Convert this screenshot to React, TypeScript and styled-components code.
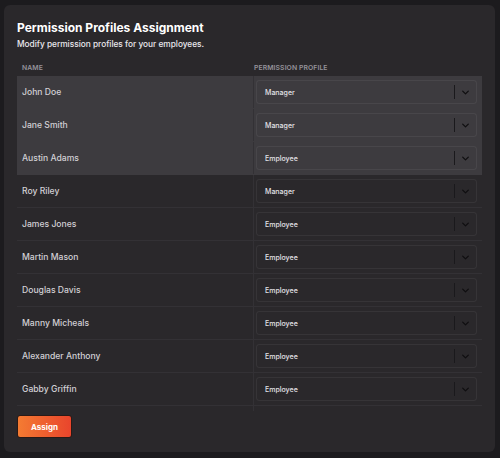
import { FC } from 'react';
import styled, { createGlobalStyle, css } from 'styled-components';

interface IEmployee {
  name: string;
  profile: 'Manager' | 'Employee';
}

const employees: IEmployee[] = [
  { name: 'John Doe', profile: 'Manager' },
  { name: 'Jane Smith', profile: 'Manager' },
  { name: 'Austin Adams', profile: 'Employee' },
  { name: 'Roy Riley', profile: 'Manager' },
  { name: 'James Jones', profile: 'Employee' },
  { name: 'Martin Mason', profile: 'Employee' },
  { name: 'Douglas Davis', profile: 'Employee' },
  { name: 'Manny Micheals', profile: 'Employee' },
  { name: 'Alexander Anthony', profile: 'Employee' },
  { name: 'Gabby Griffin', profile: 'Employee' },
];

const GlobalStyle = createGlobalStyle`
  html, body {
    margin: 0;
    padding: 0;
    background: #1c1b1e;
    font-family: Inter, "Open Sans", sans-serif;
  }
`;

/**
 * Select-like control with a divider and chevron.
 */
const ProfileSelect: FC<{ value: string }> = ({ value }) => (
  <SSelect>
    <SSelectValue>{value}</SSelectValue>
    <SSelectDivider />
    <SChevron viewBox="0 0 10 6" aria-hidden>
      <path d="M1 1l4 4 4-4" fill="none" stroke="currentColor" strokeWidth="1.8" strokeLinecap="round" strokeLinejoin="round" />
    </SChevron>
  </SSelect>
);

export default function App() {
  return (
    <>
      <GlobalStyle />
      <SPage>
        <SCard>
          <STitle>Permission Profiles Assignment</STitle>
          <SSubtitle>Modify permission profiles for your employees.</SSubtitle>

          <STable>
            <SHeadRow>
              <SHeadCell>Name</SHeadCell>
              <SHeadCell $divided>Permission Profile</SHeadCell>
            </SHeadRow>
            {employees.map((employee, index) => (
              <SRow key={employee.name} $selected={index < 3}>
                <SNameCell>{employee.name}</SNameCell>
                <SProfileCell>
                  <ProfileSelect value={employee.profile} />
                </SProfileCell>
              </SRow>
            ))}
            <STableFoot>
              <span />
              <SFootCell />
            </STableFoot>
          </STable>

          <SButton type="button">Assign</SButton>
        </SCard>
      </SPage>
    </>
  );
}

const SPage = styled.div`
  width: 500px;
  height: 458px;
  padding: 5px 5px 6px 4px;
  box-sizing: border-box;
`;

const SCard = styled.div`
  height: 100%;
  box-sizing: border-box;
  background: #2a282b;
  border-radius: 6px;
  padding: 14px 12px 14px 13px;
  display: flex;
  flex-direction: column;
  align-items: flex-start;
`;

const STitle = styled.h1`
  margin: 0;
  font-size: 12px;
  line-height: 17px;
  font-weight: 700;
  color: #ffffff;
  letter-spacing: 0px;
`;

const SSubtitle = styled.p`
  margin: 0;
  margin-top: 2px;
  font-size: 8.3px;
  line-height: 13px;
  font-weight: 500;
  color: #ebe9ee;
`;

const STable = styled.div`
  align-self: stretch;
  margin-top: 8px;
  display: flex;
  flex-direction: column;
`;

const rowGrid = css`
  display: grid;
  grid-template-columns: 236px 1fr;
`;

const SHeadRow = styled.div`
  ${rowGrid};
  height: 17px;
`;

const SHeadCell = styled.div<{ $divided?: boolean }>`
  padding-left: ${(p) => (p.$divided ? '1px' : '5px')};
  font-size: 6.8px;
  line-height: 17px;
  font-weight: 600;
  text-transform: uppercase;
  color: #95939a;
  letter-spacing: 0.1px;
`;

const SRow = styled.div<{ $selected: boolean }>`
  ${rowGrid};
  height: 33px;
  box-sizing: border-box;
  background: ${(p) => (p.$selected ? '#3d3b3f' : 'transparent')};
  border-bottom: 1px solid ${(p) => (p.$selected ? 'transparent' : '#333135')};
  margin-right: 1px;
`;

const SNameCell = styled.div`
  display: flex;
  align-items: center;
  padding-left: 5px;
  font-size: 8.6px;
  font-weight: 500;
  color: #d2d0d5;
`;

const SProfileCell = styled.div`
  display: flex;
  align-items: center;
  border-left: 1px solid #333135;
  padding: 0 5px 0 2px;
`;

const STableFoot = styled.div`
  ${rowGrid};
  height: 5px;
`;

const SFootCell = styled.div`
  border-left: 1px solid #333135;
`;

const SSelect = styled.div`
  flex: 1;
  height: 24px;
  box-sizing: border-box;
  display: flex;
  align-items: center;
  border: 1px solid rgba(255, 255, 255, 0.06);
  border-radius: 3px;
  padding-left: 8px;
`;

const SSelectValue = styled.span`
  flex: 1;
  font-size: 7px;
  font-weight: 500;
  color: #e4e2e7;
`;

const SSelectDivider = styled.span`
  width: 1px;
  height: 14px;
  background: #1a191c;
`;

const SChevron = styled.svg`
  width: 7px;
  height: 5px;
  margin: 0 7px 0 7px;
  color: #0f0e10;
`;

const SButton = styled.button`
  margin-top: 4px;
  width: 55px;
  height: 23px;
  border: 1px solid #2a1a17;
  border-radius: 3px;
  background: linear-gradient(90deg, #f47b32 0%, #e9452c 100%);
  color: #ffffff;
  font-family: Inter, sans-serif;
  font-size: 8px;
  font-weight: 700;
  padding: 0;
  cursor: pointer;
`;
